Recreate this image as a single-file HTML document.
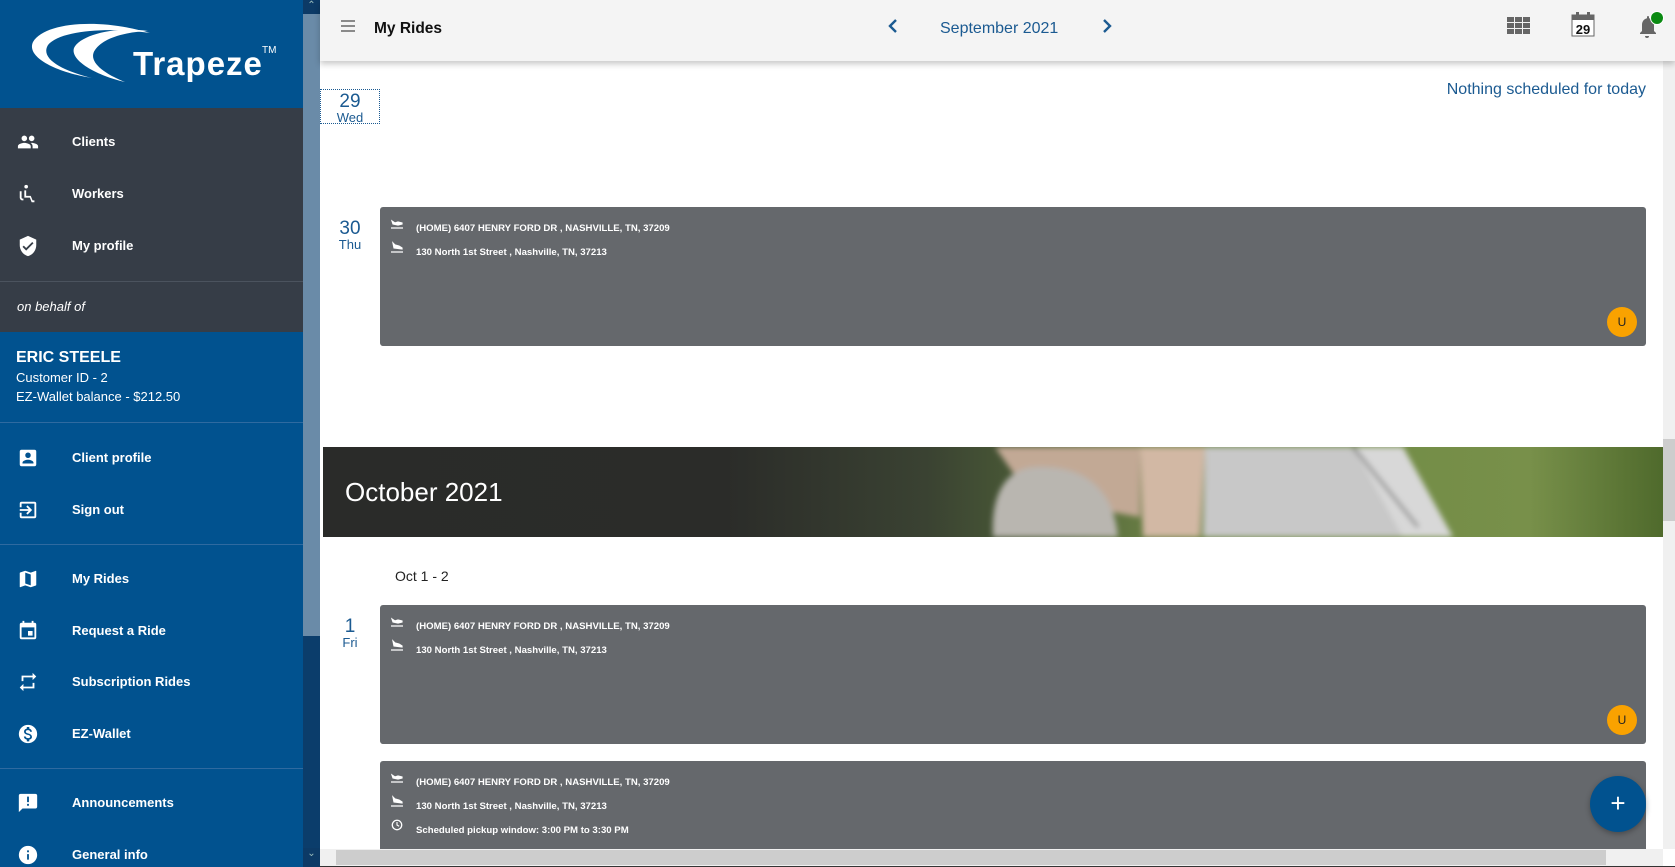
<!DOCTYPE html>
<html><head><meta charset="utf-8">
<style>
*{margin:0;padding:0;box-sizing:border-box}
body{width:1675px;height:867px;overflow:hidden;background:#fff;font-family:"Liberation Sans",sans-serif;position:relative}
.abs{position:absolute}
#side{left:0;top:0;width:303px;height:867px;background:#01528f;color:#fff}
.logo{left:0;top:0;width:303px;height:108px;background:#01528f}
.dark{left:0;top:108px;width:303px;height:224px;background:#363d47}
.item{position:absolute;left:72px;font-size:13px;font-weight:bold;color:#fff}
.ic{position:absolute;left:17px;width:22px;height:22px}
.hr{position:absolute;left:0;width:303px;height:1px;background:#2f6aa0}
.sb{left:303px;top:0;width:17px;height:867px;background:#0b3d6b}
.top{left:320px;top:0;width:1355px;height:61px;background:#f4f4f4;box-shadow:0 3px 6px rgba(0,0,0,.22);z-index:3}
.card{position:absolute;left:380px;width:1266px;background:#65686c;border-radius:3px;color:#fff}
.row{position:absolute;left:36px;font-size:9.6px;font-weight:bold;white-space:nowrap}
.ri{position:absolute;left:10px;width:14px;height:12px}
.date{position:absolute;width:60px;text-align:center;color:#1b5a91;line-height:1}
.date b{display:block;font-weight:normal;font-size:19px}
.date i{display:block;font-style:normal;font-size:13px}
.badge{position:absolute;width:30px;height:30px;border-radius:50%;background:#f9a200;color:#222;font-size:12px;text-align:center;line-height:30px}
</style></head><body>
<div id="side" class="abs">
 <div class="abs logo">
  <svg width="303" height="108" viewBox="0 0 303 108">
   <path d="M150 33 C100 18 45 22 33 42 C26 57 55 72 92 78 C60 70 40 58 48 45 C60 30 110 27 150 33Z" fill="#fff"/>
   <path d="M148 31 C115 26 80 35 74 48 C70 60 95 75 125 82 C100 72 88 60 95 50 C103 38 125 32 148 31Z" fill="#fff"/>
   <text x="133" y="75" fill="#fff" font-family="Liberation Sans" font-weight="bold" font-size="33" letter-spacing="1">Trapeze</text>
   <text x="262" y="53" fill="#fff" font-family="Liberation Sans" font-size="10">TM</text>
  </svg>
 </div>
 <div class="abs dark"></div>
 <svg class="ic" style="top:131px" viewBox="0 0 24 24"><path fill="#fff" d="M16 11c1.7 0 3-1.3 3-3s-1.3-3-3-3-3 1.3-3 3 1.3 3 3 3zm-8 0c1.7 0 3-1.3 3-3S9.7 5 8 5 5 6.3 5 8s1.3 3 3 3zm0 2c-2.3 0-7 1.2-7 3.5V19h14v-2.5C15 14.2 10.3 13 8 13zm8 0c-.3 0-.6 0-1 .1 1.2.8 2 2 2 3.4V19h6v-2.5c0-2.3-4.7-3.5-7-3.5z"/></svg>
 <div class="item" style="top:134px">Clients</div>
 <svg class="ic" style="top:183px" viewBox="0 0 24 24"><path fill="#fff" d="M10 2a2 2 0 110 4 2 2 0 010-4zm9 17h-2l-2-5h-5V8H8v8h6l2 5h3zM7 19H6a3 3 0 01-3-3V9h2v7a1 1 0 001 1h1z"/></svg>
 <div class="item" style="top:186px">Workers</div>
 <svg class="ic" style="top:235px" viewBox="0 0 24 24"><path fill="#fff" d="M12 1L3 5v6c0 5.6 3.8 10.7 9 12 5.2-1.3 9-6.4 9-12V5l-9-4zm-2 16l-4-4 1.4-1.4 2.6 2.6 6.6-6.6L18 9l-8 8z"/></svg>
 <div class="item" style="top:238px">My profile</div>
 <div class="hr" style="top:281px;background:#4b535e"></div>
 <div class="abs" style="left:17px;top:299px;font-size:13px;font-style:italic">on behalf of</div>
 <div class="abs" style="left:16px;top:349px;font-size:16px;font-weight:bold">ERIC STEELE</div>
 <div class="abs" style="left:16px;top:370px;font-size:13px">Customer ID - 2</div>
 <div class="abs" style="left:16px;top:389px;font-size:13px">EZ-Wallet balance - $212.50</div>
 <div class="hr" style="top:422px"></div>
 <svg class="ic" style="top:447px" viewBox="0 0 24 24"><path fill="#fff" d="M3 5v14a2 2 0 002 2h14a2 2 0 002-2V5a2 2 0 00-2-2H5a2 2 0 00-2 2zm12 4a3 3 0 11-6 0 3 3 0 016 0zm-9 8c0-2 4-3.1 6-3.1s6 1.1 6 3.1v1H6z"/></svg>
 <div class="item" style="top:450px">Client profile</div>
 <svg class="ic" style="top:499px" viewBox="0 0 24 24"><path fill="#fff" d="M10.1 15.6L11.5 17l5-5-5-5-1.4 1.4 2.6 2.6H3v2h9.7l-2.6 2.6zM19 3H5a2 2 0 00-2 2v4h2V5h14v14H5v-4H3v4a2 2 0 002 2h14a2 2 0 002-2V5a2 2 0 00-2-2z"/></svg>
 <div class="item" style="top:502px">Sign out</div>
 <div class="hr" style="top:544px"></div>
 <svg class="ic" style="top:568px" viewBox="0 0 24 24"><path fill="#fff" d="M20.5 3l-.2.1L15 5.1 9 3 3.4 4.9c-.2.1-.4.3-.4.5v15.1c0 .3.2.5.5.5l.2-.1L9 18.9l6 2.1 5.6-1.9c.2-.1.4-.3.4-.5V3.5c0-.3-.2-.5-.5-.5zM15 19l-6-2.1V5l6 2.1V19z"/></svg>
 <div class="item" style="top:571px">My Rides</div>
 <svg class="ic" style="top:620px" viewBox="0 0 24 24"><path fill="#fff" d="M17 12h-5v5h5v-5zM16 1v2H8V1H6v2H5a2 2 0 00-2 2v14a2 2 0 002 2h14a2 2 0 002-2V5a2 2 0 00-2-2h-1V1h-2zm3 18H5V8h14v11z"/></svg>
 <div class="item" style="top:623px">Request a Ride</div>
 <svg class="ic" style="top:671px" viewBox="0 0 24 24"><path fill="#fff" d="M7 7h10v3l4-4-4-4v3H5v6h2V7zm10 10H7v-3l-4 4 4 4v-3h12v-6h-2v4z"/></svg>
 <div class="item" style="top:674px">Subscription Rides</div>
 <svg class="ic" style="top:723px" viewBox="0 0 24 24"><path fill="#fff" d="M12 2a10 10 0 100 20 10 10 0 000-20zm1.4 16.1V20h-2.7v-1.9c-1.7-.4-3.1-1.5-3.2-3.4h2c.1 1 .8 1.8 2.6 1.8 1.9 0 2.3-1 2.3-1.5 0-.8-.4-1.5-2.6-2-2.4-.6-4.1-1.6-4.1-3.6 0-1.700 1.4-2.8 3-3.2V4.3h2.7v1.9c1.9.5 2.8 1.9 2.9 3.4h-2c-.1-1.100-.6-1.800-2.300-1.800-1.500 0-2.400.7-2.400 1.700 0 .9.7 1.4 2.6 1.9s4.1 1.3 4.1 3.7c0 1.8-1.3 2.7-3 3z"/></svg>
 <div class="item" style="top:726px">EZ-Wallet</div>
 <div class="hr" style="top:768px"></div>
 <svg class="ic" style="top:792px" viewBox="0 0 24 24"><path fill="#fff" d="M20 2H4a2 2 0 00-2 2v18l4-4h14a2 2 0 002-2V4a2 2 0 00-2-2zm-7 9h-2V5h2v6zm0 4h-2v-2h2v2z"/></svg>
 <div class="item" style="top:795px">Announcements</div>
 <svg class="ic" style="top:844px" viewBox="0 0 24 24"><path fill="#fff" d="M12 2a10 10 0 100 20 10 10 0 000-20zm1 15h-2v-6h2v6zm0-8h-2V7h2v2z"/></svg>
 <div class="item" style="top:847px">General info</div>
</div>
<div class="abs sb">
 <div class="abs" style="left:0;top:0;width:17px;height:14px;background:#0c3a66;color:#9bb;font-size:10px;text-align:center">&#8963;</div>
 <div class="abs" style="left:0;top:14px;width:17px;height:622px;background:#6a8ba8"></div>
 <div class="abs" style="left:0;top:848px;width:17px;height:19px;background:#0c3a66;color:#9bb;font-size:10px;text-align:center">&#8964;</div>
</div>

<div class="abs top">
 <svg class="abs" style="left:20px;top:20px" width="16" height="12" viewBox="0 0 16 12"><path d="M1 1h14M1 6h14M1 11h14" stroke="#666" stroke-width="1.4"/></svg>
 <div class="abs" style="left:54px;top:20px;font-size:15.5px;font-weight:bold;color:#111">My Rides</div>
 <svg class="abs" style="left:567px;top:18px" width="12" height="16" viewBox="0 0 12 16"><path d="M9 2L3 8l6 6" stroke="#1b5a91" stroke-width="2.4" fill="none"/></svg>
 <div class="abs" style="left:620px;top:20px;font-size:16px;color:#1b5a91">September 2021</div>
 <svg class="abs" style="left:781px;top:18px" width="12" height="16" viewBox="0 0 12 16"><path d="M3 2l6 6-6 6" stroke="#1b5a91" stroke-width="2.4" fill="none"/></svg>
 <svg class="abs" style="left:1187px;top:17px" width="23" height="17" viewBox="0 0 23 17"><g fill="#666"><rect x="0" y="0" width="7" height="5"/><rect x="8" y="0" width="7" height="5"/><rect x="16" y="0" width="7" height="5"/><rect x="0" y="6" width="7" height="5"/><rect x="8" y="6" width="7" height="5"/><rect x="16" y="6" width="7" height="5"/><rect x="0" y="12" width="7" height="5"/><rect x="8" y="12" width="7" height="5"/><rect x="16" y="12" width="7" height="5"/></g></svg>
 <svg class="abs" style="left:1251px;top:11px" width="24" height="26" viewBox="0 0 24 26"><rect x="1" y="4" width="22" height="21" fill="#fff" stroke="#666" stroke-width="1"/><rect x="1" y="4" width="22" height="5" fill="#666"/><rect x="5" y="1" width="3" height="5" fill="#666"/><rect x="16" y="1" width="3" height="5" fill="#666"/><text x="12" y="23" text-anchor="middle" font-family="Liberation Sans" font-weight="bold" font-size="13" fill="#111">29</text></svg>
 <svg class="abs" style="left:1315px;top:10px" width="30" height="30" viewBox="0 0 30 30"><path d="M10 26h4a2 2 0 01-4 0zM5 24v-1l2-2v-6c0-3.5 2-6 5-6.7V7a1 1 0 012 0v1.3c3 .7 5 3.2 5 6.7v6l2 2v1z" fill="#666"/><circle cx="22" cy="8" r="7" fill="#fff"/><circle cx="22" cy="8" r="6" fill="#0a8a12"/></svg>
</div>

<div class="abs" style="left:320px;top:89px;width:60px;height:35px;border:1px dotted #1b5a91"></div>
<div class="date" style="left:320px;top:92px"><b>29</b><i>Wed</i></div>
<div class="abs" style="right:29px;top:81px;font-size:16px;color:#1b5a91">Nothing scheduled for today</div>

<div class="date" style="left:320px;top:219px"><b>30</b><i>Thu</i></div>
<div class="card" style="top:207px;height:139px">
 <svg class="ri" style="top:10px" viewBox="0 0 14 12"><path d="M1 11h12M2 4l3 2 3-1 4 1v1l-4 1-5-1z" stroke="#fff" fill="#fff" stroke-width="1.2"/></svg>
 <div class="row" style="top:16px">(HOME) 6407 HENRY FORD DR , NASHVILLE, TN, 37209</div>
 <svg class="ri" style="top:34px" viewBox="0 0 14 12"><path d="M1 11h12M3 2l1 5 8 1v-1l-3-2-4-1z" stroke="#fff" fill="#fff" stroke-width="1.2"/></svg>
 <div class="row" style="top:40px">130 North 1st Street , Nashville, TN, 37213</div>
 <div class="badge" style="left:1227px;top:100px">U</div>
</div>

<div class="abs" style="left:323px;top:447px;width:1340px;height:90px;overflow:hidden;background:linear-gradient(90deg,#2a2b29 0%,#2b2c29 30%,#3a4232 45%,#4f6237 55%,#6a7f45 62%,#6f8a44 70%,#78904a 90%,#4f6a2c 100%)">
 <svg class="abs" style="left:0;top:0" width="1340" height="90" viewBox="0 0 1340 90">
  <defs><filter id="b"><feGaussianBlur stdDeviation="3"/></filter></defs>
  <g filter="url(#b)">
  <path d="M672 0 L817 0 L817 70 L760 60 L700 40 Z" fill="#c2a995"/>
  <path d="M670 90 C668 55 678 22 712 20 C760 18 790 40 795 90Z" fill="#b9b6b0"/>
  <path d="M817 0 L882 0 L877 90 L820 90 Z" fill="#d2b8a4"/>
  <path d="M882 0 L1080 0 L1110 90 L880 90 Z" fill="#c8c8c8"/>
  <path d="M1030 0 L1080 0 L1130 90 L1080 90Z" fill="#d8d8d8"/>
  <path d="M1030 0 L1095 80" stroke="#333" stroke-width="2"/>
  </g>
 </svg>
 <div class="abs" style="left:22px;top:2px;line-height:86px;font-size:26px;color:#fff">October 2021</div>
</div>

<div class="abs" style="left:395px;top:568px;font-size:14px;color:#222">Oct 1 - 2</div>

<div class="date" style="left:320px;top:617px"><b>1</b><i>Fri</i></div>
<div class="card" style="top:605px;height:139px">
 <svg class="ri" style="top:10px" viewBox="0 0 14 12"><path d="M1 11h12M2 4l3 2 3-1 4 1v1l-4 1-5-1z" stroke="#fff" fill="#fff" stroke-width="1.2"/></svg>
 <div class="row" style="top:16px">(HOME) 6407 HENRY FORD DR , NASHVILLE, TN, 37209</div>
 <svg class="ri" style="top:34px" viewBox="0 0 14 12"><path d="M1 11h12M3 2l1 5 8 1v-1l-3-2-4-1z" stroke="#fff" fill="#fff" stroke-width="1.2"/></svg>
 <div class="row" style="top:40px">130 North 1st Street , Nashville, TN, 37213</div>
 <div class="badge" style="left:1227px;top:100px">U</div>
</div>

<div class="card" style="top:761px;height:100px">
 <svg class="ri" style="top:10px" viewBox="0 0 14 12"><path d="M1 11h12M2 4l3 2 3-1 4 1v1l-4 1-5-1z" stroke="#fff" fill="#fff" stroke-width="1.2"/></svg>
 <div class="row" style="top:16px">(HOME) 6407 HENRY FORD DR , NASHVILLE, TN, 37209</div>
 <svg class="ri" style="top:34px" viewBox="0 0 14 12"><path d="M1 11h12M3 2l1 5 8 1v-1l-3-2-4-1z" stroke="#fff" fill="#fff" stroke-width="1.2"/></svg>
 <div class="row" style="top:40px">130 North 1st Street , Nashville, TN, 37213</div>
 <svg class="ri" style="top:58px" viewBox="0 0 14 14"><circle cx="7" cy="7" r="5.5" stroke="#fff" fill="none" stroke-width="1.5"/><path d="M7 3.5V7l2.5 1.5" stroke="#fff" fill="none" stroke-width="1.3"/></svg>
 <div class="row" style="top:64px">Scheduled pickup window: 3:00 PM to 3:30 PM</div>
</div>

<div class="abs" style="left:1590px;top:776px;width:56px;height:56px;border-radius:50%;background:#01528f;box-shadow:0 2px 6px rgba(0,0,0,.3);color:#fff;font-size:26px;text-align:center;line-height:54px">+</div>

<div class="abs" style="left:1663px;top:61px;width:12px;height:788px;background:#f0f0f0">
 <div class="abs" style="left:0;top:378px;width:12px;height:82px;background:#cdcdcd"></div>
</div>
<div class="abs" style="left:320px;top:849px;width:1343px;height:17px;background:#f0f0f0">
 <div class="abs" style="left:16px;top:1px;width:1270px;height:15px;background:#cdcdcd"></div>
</div>
<div class="abs" style="left:320px;top:866px;width:1355px;height:1px;background:#333"></div>
</body></html>
